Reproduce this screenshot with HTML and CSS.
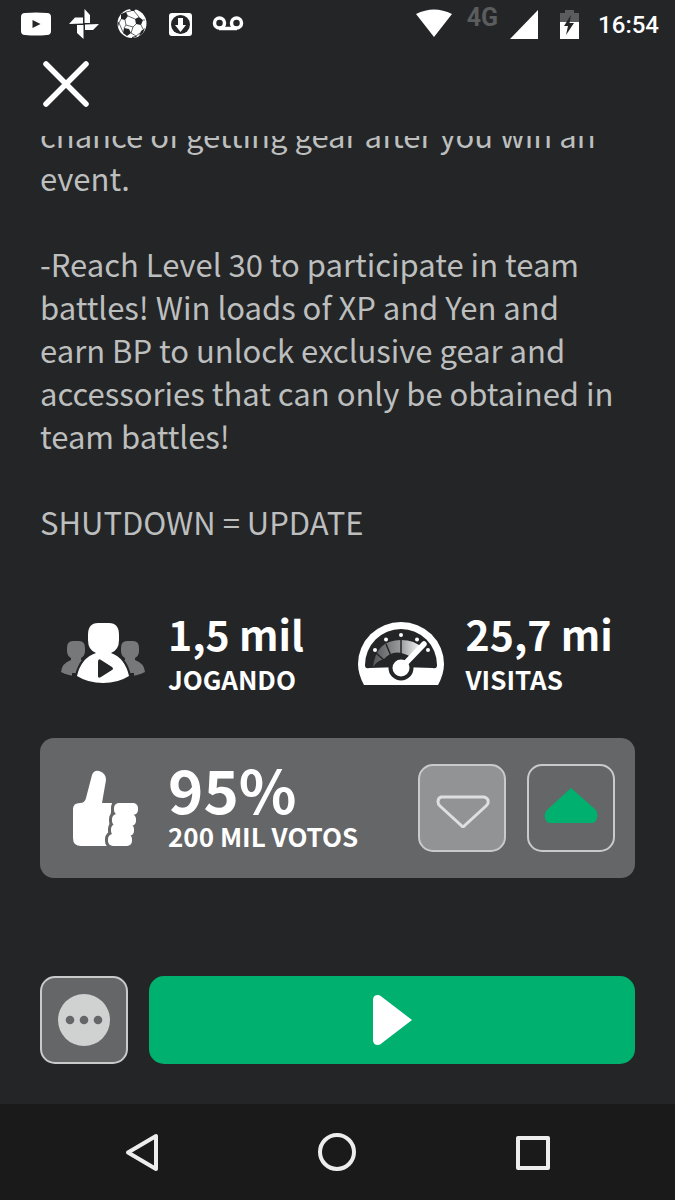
FILE: index.html
```html
<!DOCTYPE html>
<html lang="pt-BR">
<head>
<meta charset="utf-8">
<meta name="viewport" content="width=device-width, initial-scale=1">
<title>Detalhes do jogo</title>
<link rel="stylesheet" href="styles.css">
</head>
<body>
<div class="screen">
  <header class="status">
    <div class="status-group">
      <svg width="32" height="32" viewBox="0 0 32 32"><path fill="#fff" fill-rule="evenodd" d="M5 5Q16 4 27 5Q31 5 31 9V23Q31 27 27 27Q16 28 5 27Q1 27 1 23V9Q1 5 5 5ZM12.500 12V20L20.500 16Z"/></svg>
      <svg width="32" height="32" viewBox="0 0 32 32"><path fill="#fff" d="M16.500 1L22 7V15H16.500ZM31 16L25 22H17V16.500ZM15.500 31L9 25V17H15.500ZM1 16L7 9.500H15V15.500Z"/></svg>
      <svg width="32" height="32" viewBox="0 0 32 32"><circle cx="16" cy="15.500" r="14.500" fill="#fff"/><g fill="#232527"><path d="M5 6L10 4L12 8L9 12L5 11ZM19 11L23 9L27 12L25 17L20 16ZM8 20L13 21L15 25L11 28L7 25ZM14 1H20L18 3H15ZM25 23L29 20L27 25L23 28ZM1.500 13L3 15L2 19ZM16 29L20 28L21 29L16 30Z"/></g><path d="M12 8L19 11M9 12L10 17L8 20M10 17L17 19L20 16M17 19L15 25M25 17L27 21M27 12L29 12M10 4L15 3M18 3L23 9M3 15L5 11M3 15L7 24M15 25L20 28L24 25" fill="none" stroke="#232527" stroke-width="0.700"/></svg>
      <svg width="32" height="32" viewBox="0 0 32 32"><rect x="5" y="5" width="23" height="23" rx="3" fill="#fff"/><circle cx="16.500" cy="16.500" r="9.500" fill="#232527"/><path d="M14 10H19V17H22L16.500 24L11 17H14Z" fill="#fff"/></svg>
      <svg width="32" height="32" viewBox="0 0 32 32"><g fill="none" stroke="#fff" stroke-width="3.500"><circle cx="7.500" cy="15" r="5"/><circle cx="24.500" cy="15" r="5"/><path d="M7 20.500H25"/></g></svg>
    </div>
    <div class="status-group status-right">
      <svg width="36" height="32" viewBox="0 0 36 32"><path fill="#fff" d="M0 6Q18-3 36 6L18 29Z"/></svg>
      <span class="network">4G</span>
      <svg width="28" height="32" viewBox="0 0 28 32"><path fill="#fff" d="M28 2V31H0Z"/></svg>
      <svg class="battery" width="20" height="32" viewBox="0 0 20 32"><path fill="#5b5c5e" d="M5 2H14V5H19V14H0V5H5Z"/><path fill="#fff" d="M0 14H19V31H0Z"/><path fill="#232527" d="M11 7L9.500 15H14L6 27L8 18H4Z"/></svg>
      <time class="clock">16:54</time>
    </div>
  </header>

  <div class="topbar">
    <button class="close" type="button" aria-label="Fechar">
      <svg width="52" height="52" viewBox="0 0 52 52"><path d="M6 6L46 46M46 6L6 46" stroke="#fff" stroke-width="5.500" stroke-linecap="round"/></svg>
    </button>
  </div>

  <main class="content">
    <section class="description">
      <p>chance of getting gear after you win an event.</p>
      <p>-Reach Level 30 to participate in team battles! Win loads of XP and Yen and earn BP to unlock exclusive gear and accessories that can only be obtained in team battles!</p>
      <p>SHUTDOWN = UPDATE</p>
    </section>

    <section class="stats">
      <div class="stat">
        <svg width="86" height="64" viewBox="0 0 86 64">
          <g fill="#77787a"><path id="side" d="M7 27Q7 20 13 20H19Q25 20 25 27V30Q25 35 21 37V39L24 41V56Q7 55 1 51Q2 42 11 39V37Q7 35 7 30Z"/><use href="#side" transform="matrix(-1 0 0 1 86 0)"/></g>
          <path d="M37 33Q22 37 18 55H15V62H71V55H68Q64 37 50 33Z" fill="#232527" stroke="#232527" stroke-width="6"/>
          <path fill="#fff" fill-rule="evenodd" d="M28 14Q28 2 38 2H49Q59 2 59 14V19Q59 29 51 32Q65 37 69 55Q58 62 43 62Q28 62 17 55Q21 37 36 32Q28 29 28 19ZM38 41V55Q38 58 41 56L52 49Q54 48 52 46L41 39Q38 37 38 41Z"/>
        </svg>
        <div class="figures"><strong class="value">1,5 mil</strong><span class="label">JOGANDO</span></div>
      </div>
      <div class="stat">
        <svg width="86" height="64" viewBox="0 0 86 64">
          <defs><linearGradient id="dial"><stop offset="0" stop-color="#55565a"/><stop offset=".55" stop-color="#98999b"/><stop offset="1" stop-color="#fff"/></linearGradient></defs>
          <path fill="#fff" d="M6 64Q0 53 0 43A43 42 0 0 1 86 43Q86 53 80 64Z"/>
          <path fill="#232527" d="M7 44A36 36 0 0 1 79 44Q79 48 75 47L43 46L11 47Q7 48 7 44Z"/>
          <path fill="url(#dial)" d="M15 46Q18 19 43 19Q57 19 64 27L53 36Q36 26 26 38Q20 39 15 46Z"/>
          <path d="M43 19V35M28 23L33 35M18 32L27 40" stroke="#232527" stroke-width="1.500"/>
          <circle cx="43" cy="47" r="12.500" fill="#232527"/><circle cx="43" cy="47" r="8.500" fill="#fff"/>
          <path d="M43 47L66 23" stroke="#fff" stroke-width="5.500" stroke-linecap="round"/>
          <g fill="#fff"><circle cx="17" cy="29" r="2"/><circle cx="28" cy="18.500" r="2"/><circle cx="43" cy="14" r="2"/><circle cx="59" cy="18.500" r="2"/><circle cx="70" cy="29" r="2"/></g>
        </svg>
        <div class="figures"><strong class="value">25,7 mi</strong><span class="label">VISITAS</span></div>
      </div>
    </section>

    <section class="rating">
      <div class="stat">
        <svg width="86" height="76" viewBox="0 0 86 76">
          <path fill="#fff" d="M13 39Q13 33 20 33Q25 33 26 28L32 5Q34 0 39 1Q46 3 46 10L42 33H52L47 76H21Q13 76 13 68Z"/>
          <g fill="#656668" stroke="#656668" stroke-width="6"><rect x="54" y="33" width="24" height="12" rx="5"/><rect x="52" y="44" width="24" height="12" rx="5"/><rect x="51" y="54" width="23" height="12" rx="5"/><rect x="48" y="64" width="24" height="12" rx="5"/></g>
          <g fill="#fff"><rect x="54" y="33" width="24" height="12" rx="5"/><rect x="52" y="44" width="24" height="12" rx="5"/><rect x="51" y="54" width="23" height="12" rx="5"/><rect x="48" y="64" width="24" height="12" rx="5"/></g>
        </svg>
        <div class="figures"><strong class="score">95%</strong><span class="label">200 MIL VOTOS</span></div>
      </div>
      <div class="votes">
        <button class="tile tile-light" type="button" aria-label="Não gostei"><svg width="56" height="40" viewBox="0 0 56 40"><path d="M7 9H50Q55 10 54 15Q54 16 52 18L29 39L6 18Q4 16 4 14Q4 10 7 9Z" fill="none" stroke="#dedfe0" stroke-width="3"/></svg></button>
        <button class="tile tile-clear" type="button" aria-label="Gostei"><svg width="56" height="40" viewBox="0 0 56 40"><path d="M28 0L53 22Q55 25 54 30Q53 35 49 35H7Q3 35 2 30Q1 25 4 22Z" fill="#00b06f"/></svg></button>
      </div>
    </section>

    <section class="actions">
      <button class="tile tile-dark" type="button" aria-label="Mais"><svg width="52" height="52" viewBox="0 0 52 52"><circle cx="26" cy="26" r="26" fill="#d0d1d1"/><g fill="#656668"><circle cx="12" cy="26" r="4.300"/><circle cx="26" cy="26" r="4.300"/><circle cx="40" cy="26" r="4.300"/></g></svg></button>
      <button class="play" type="button" aria-label="Jogar"><svg width="40" height="50" viewBox="0 0 40 50"><path fill="#fff" d="M1 5Q1 0 6 0Q8 0 10 2L40 25L10 48Q8 50 6 50Q1 50 1 45Z"/></svg></button>
    </section>
  </main>

  <nav class="navbar" aria-label="Sistema">
    <button type="button" aria-label="Voltar"><svg width="40" height="40" viewBox="0 0 40 40"><path d="M34 4V37L6 20.500Z"/></svg></button>
    <button type="button" aria-label="Início"><svg width="40" height="40" viewBox="0 0 40 40"><circle cx="20" cy="20" r="17"/></svg></button>
    <button type="button" aria-label="Recentes"><svg width="40" height="40" viewBox="0 0 40 40"><rect x="5" y="6" width="30" height="30"/></svg></button>
  </nav>
</div>
</body>
</html>
```
FILE: styles.css
```css
* {
  box-sizing: border-box;
}

body {
  margin: 0;
  background: #232527;
  color: #fff;
  font-family: "Noto Sans CJK SC", "Noto Sans", sans-serif;
}

svg {
  display: block;
  flex: none;
}

button {
  display: flex;
  align-items: center;
  justify-content: center;
  padding: 0;
  border: 0;
  background: none;
  cursor: pointer;
}

.screen {
  display: flex;
  flex-direction: column;
  height: 100vh;
}

.status {
  display: flex;
  justify-content: space-between;
  height: 48px;
  padding: 8px 16px 8px 20px;
}

.status-group {
  display: flex;
  gap: 16px;
}

.status-right {
  gap: 12px;
  font-family: Roboto, sans-serif;
}

.network {
  padding-left: 3px;
  color: #5b5c5e;
  font-size: 25px;
  font-weight: 700;
  line-height: 19px;
}

.battery {
  margin: 0 6px 0 10px;
}

.clock {
  font-size: 24px;
  font-weight: 500;
  line-height: 34px;
}

.topbar {
  display: flex;
  height: 88px;
  padding: 10px 40px;
}

.close {
  width: 52px;
  height: 52px;
}

.content {
  display: flex;
  flex: 1;
  flex-direction: column;
  min-height: 0;
  padding: 0 40px 40px;
}

.description {
  display: flex;
  flex: 1;
  flex-direction: column;
  justify-content: flex-end;
  gap: 43px;
  min-height: 0;
  padding-right: 12px;
  overflow: hidden;
  color: #bdbebe;
  font-size: 31px;
  line-height: 43px;
}

.description p {
  margin: 0;
}

.stats {
  display: grid;
  grid-template-columns: 1fr 1fr;
  margin: 66px 0 41px;
}

.stat {
  display: flex;
  align-items: center;
  gap: 22px;
  padding-left: 20px;
}

.figures {
  display: flex;
  flex-direction: column;
  gap: 4px;
  white-space: nowrap;
}

.value {
  font-size: 41px;
  line-height: 48px;
}

.score {
  font-size: 60px;
  line-height: 60px;
}

.label {
  font-size: 26px;
  font-weight: 700;
  line-height: 36px;
}

.rating {
  display: flex;
  align-items: center;
  justify-content: space-between;
  padding: 26px 20px 26px 0;
  border-radius: 14px;
  background: #656668;
}

.rating .stat {
  height: 88px;
}

.rating .figures {
  gap: 0;
  padding-bottom: 4px;
}

.votes {
  display: flex;
  gap: 21px;
}

.tile {
  flex: none;
  width: 88px;
  height: 88px;
  border: 2px solid #c9caca;
  border-radius: 15px;
}

.tile-light {
  background: #929395;
}

.tile-dark {
  background: #656668;
}

.actions {
  display: flex;
  gap: 21px;
  margin-top: 98px;
}

.play {
  flex: 1;
  border-radius: 15px;
  background: #00b06f;
}

.navbar {
  display: grid;
  grid-template-columns: repeat(3, 1fr);
  height: 96px;
  padding: 0 44px;
  background: #1a1a1a;
}

.navbar svg {
  fill: none;
  stroke: #ededed;
  stroke-width: 4;
  stroke-linejoin: round;
}
```
